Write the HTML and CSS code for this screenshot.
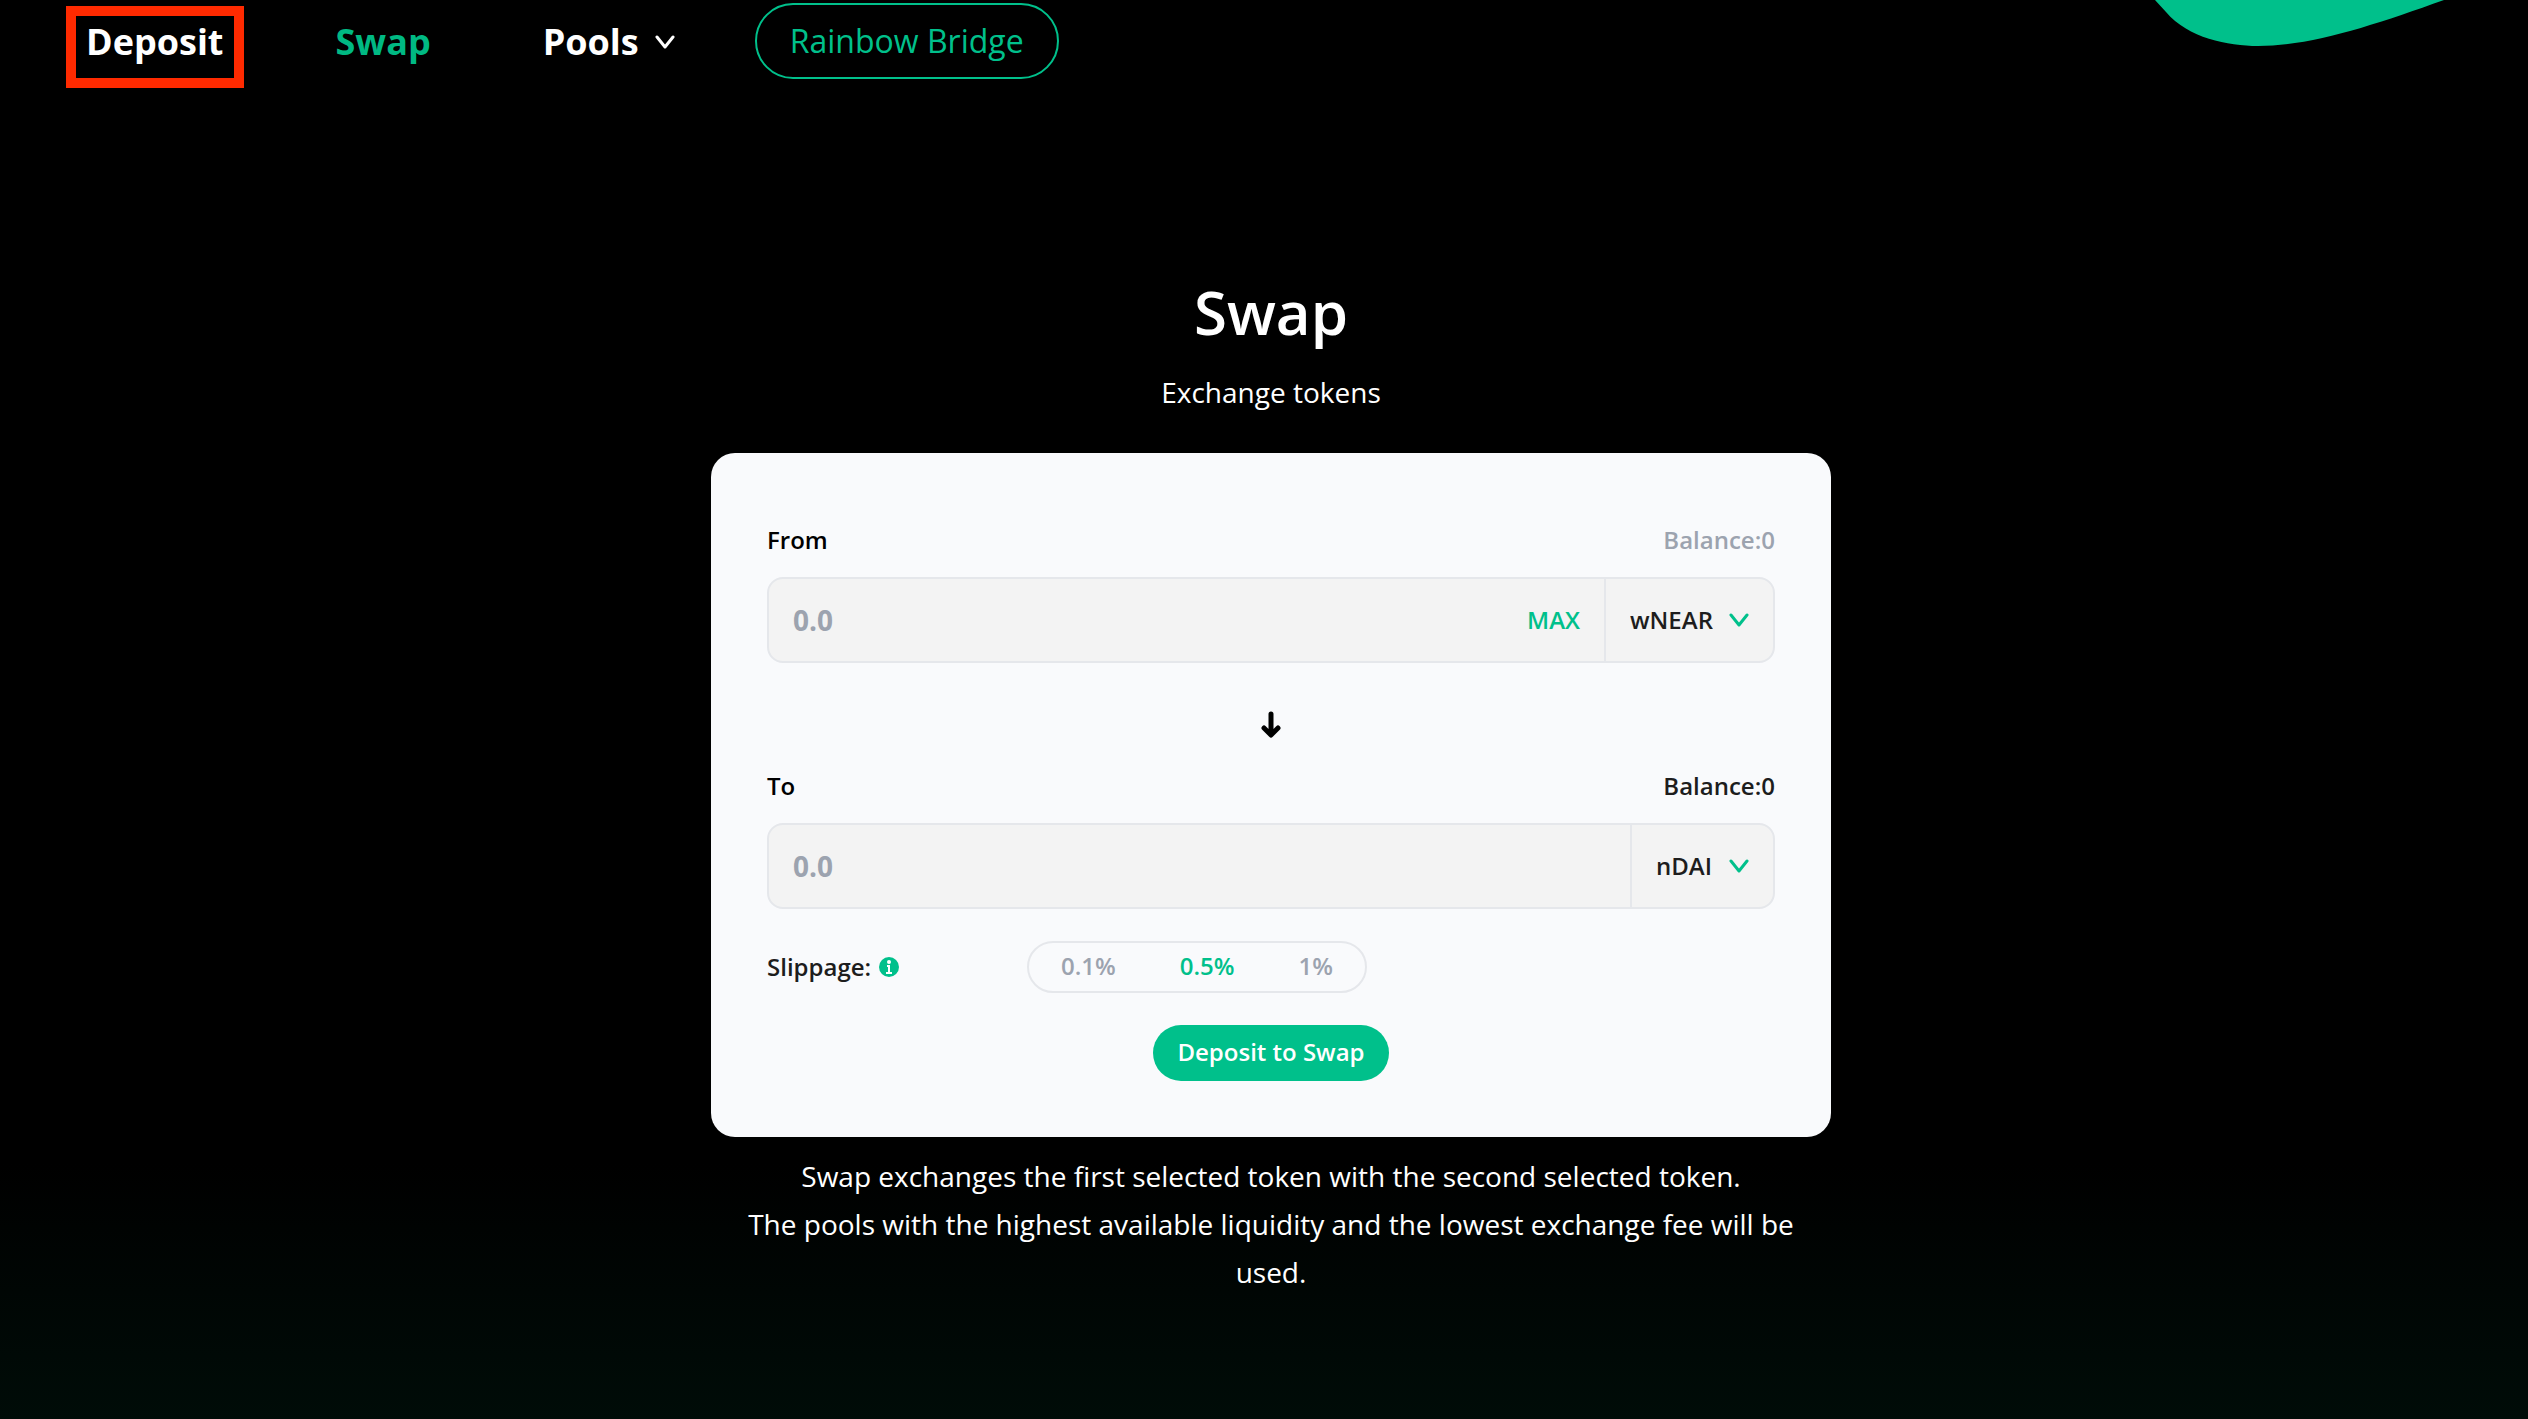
FILE: index.html
```html
<!DOCTYPE html>
<html lang="en">
  <head>
    <meta charset="utf-8">
    <title>Swap</title>
    <link rel="stylesheet" href="styles.css">
  </head>
  <body>
    <svg class="blob" viewBox="0 0 300 50" aria-hidden="true">
      <path d="M5 0 L16 12 C38 38 78 46 108 46 C162 46 224 25 294 0 Z"/>
    </svg>
    <nav class="nav">
      <a class="nav-link marked" href="#deposit">Deposit</a>
      <a class="nav-link active" href="#swap">Swap</a>
      <button class="nav-link pools" type="button">Pools
        <svg class="chevron" viewBox="0 0 20 14"><path d="M2 2l8 10 8-10"/></svg>
      </button>
      <a class="bridge" href="#bridge">Rainbow Bridge</a>
    </nav>

    <main class="swap">
      <h1>Swap</h1>
      <p class="subtitle">Exchange tokens</p>

      <form class="card">
        <div class="row">
          <label for="from">From</label>
          <span class="muted">Balance:0</span>
        </div>
        <div class="field">
          <input id="from" class="amount" type="text" placeholder="0.0">
          <button class="max" type="button">MAX</button>
          <div class="token">
            <select aria-label="From token">
              <option>wNEAR</option>
            </select>
            <svg class="chevron" viewBox="0 0 20 14"><path d="M2 2l8 10 8-10"/></svg>
          </div>
        </div>

        <svg class="arrow" viewBox="0 0 20 28"><path d="M10 3v20M3 17l7 7 7-7"/></svg>

        <div class="row">
          <label for="to">To</label>
          <span>Balance:0</span>
        </div>
        <div class="field">
          <input id="to" class="amount" type="text" placeholder="0.0">
          <div class="token">
            <select aria-label="To token">
              <option>nDAI</option>
            </select>
            <svg class="chevron" viewBox="0 0 20 14"><path d="M2 2l8 10 8-10"/></svg>
          </div>
        </div>

        <div class="slippage">
          <div class="slippage-label">Slippage:
            <svg class="info" viewBox="0 0 20 20">
              <circle cx="10" cy="10" r="10"/>
              <path d="M8 9h2v7M7 16h6"/>
              <circle class="dot" cx="10" cy="5" r="2"/>
            </svg>
          </div>
          <div class="options">
            <button type="button">0.1%</button>
            <button class="selected" type="button">0.5%</button>
            <button type="button">1%</button>
          </div>
        </div>

        <button class="submit" type="submit">Deposit to Swap</button>
      </form>

      <p class="about">Swap exchanges the first selected token with the second selected token.<br>
        The pools with the highest available liquidity and the lowest exchange fee will be used.</p>
    </main>
  </body>
</html>
```

FILE: styles.css
```css
* {
  box-sizing: border-box;
}
body {
  margin: 0;
  min-height: 100vh;
  background: linear-gradient(#000 82%, #000c08);
  color: #fff;
  font-family: "Open Sans", sans-serif;
  font-size: 24px;
  line-height: 36px;
}
button, input, select {
  border: 0;
  padding: 0;
  background: none;
  color: inherit;
  font: inherit;
}
button {
  cursor: pointer;
}
a {
  color: inherit;
  text-decoration: none;
}
h1, p {
  margin: 0;
}
.blob {
  position: absolute;
  top: 0;
  right: 78px;
  width: 300px;
  fill: #00c08b;
}

/* top menu */
.nav {
  display: flex;
  align-items: center;
  padding: 3px 86px 0;
}
.nav-link {
  position: relative;
  margin-right: 112px;
  padding-top: 2px;
  font-size: 36px;
  font-weight: 700;
}
.active {
  color: #00b983;
}
.marked::after {
  content: "";
  position: absolute;
  inset: -16px -20px -28px;
  border: 10px solid #ff2a00;
}
.pools {
  display: flex;
  align-items: center;
  gap: 16px;
  margin-right: 80px;
}
.bridge {
  padding: 18px 33px;
  border: 2px solid #00c08b;
  border-radius: 38px;
  color: #00c08b;
  font-size: 32px;
}
.chevron {
  width: 20px;
  height: 14px;
  fill: none;
  stroke: currentColor;
  stroke-width: 3;
  stroke-linecap: round;
  stroke-linejoin: round;
}

/* swap form */
.swap {
  display: flex;
  flex-direction: column;
  align-items: center;
  padding: 187px 0 64px 14px;
  text-align: center;
}
h1 {
  font-size: 60px;
  font-weight: 600;
  line-height: 92px;
}
.subtitle {
  margin: 10px 0 37px;
  font-size: 28px;
  line-height: 48px;
}
.card {
  width: 100%;
  max-width: 1120px;
  padding: 56px;
  border-radius: 24px;
  background: #f9fafc;
  color: #1d1d1d;
  font-weight: 600;
}
.row {
  display: flex;
  justify-content: space-between;
  padding: 13px 0 19px;
}
.row label {
  color: #000;
}
.muted {
  color: #9ca3af;
}
.field {
  display: flex;
  height: 86px;
  border: 2px solid #e5e7eb;
  border-radius: 16px;
  background: #f3f3f3;
}
.amount {
  flex: 1;
  min-width: 0;
  padding: 0 24px;
  font-size: 28px;
  font-weight: 700;
}
.amount::placeholder {
  color: #9ca3af;
}
.max {
  padding: 0 24px;
  color: #00c08b;
}
.token {
  display: flex;
  align-items: center;
  gap: 16px;
  padding: 0 24px;
  border-left: 2px solid #e5e7eb;
}
.token select {
  appearance: none;
}
.token .chevron {
  color: #00c08b;
}
.arrow {
  display: block;
  width: 20px;
  height: 28px;
  margin: 48px auto 16px;
  fill: none;
  stroke: #000;
  stroke-width: 5;
  stroke-linecap: round;
  stroke-linejoin: round;
}
.slippage {
  display: flex;
  align-items: center;
  margin: 32px 0;
}
.slippage-label {
  display: flex;
  align-items: center;
  gap: 8px;
  width: 260px;
  text-align: left;
}
.info {
  width: 20px;
  height: 20px;
  fill: #00c08b;
}
.info path {
  fill: none;
  stroke: #fff;
  stroke-width: 2;
}
.info .dot {
  fill: #fff;
}
.options {
  display: flex;
  gap: 64px;
  padding: 5px 32px 7px;
  border: 2px solid #e5e7eb;
  border-radius: 26px;
  color: #9ca3af;
}
.options .selected {
  color: #00c08b;
}
.submit {
  padding: 9px 24px 11px;
  border-radius: 28px;
  background: #00c08b;
  color: #fff;
}
.about {
  max-width: 1120px;
  padding: 15px 32px;
  font-size: 28px;
  line-height: 48px;
}
```
